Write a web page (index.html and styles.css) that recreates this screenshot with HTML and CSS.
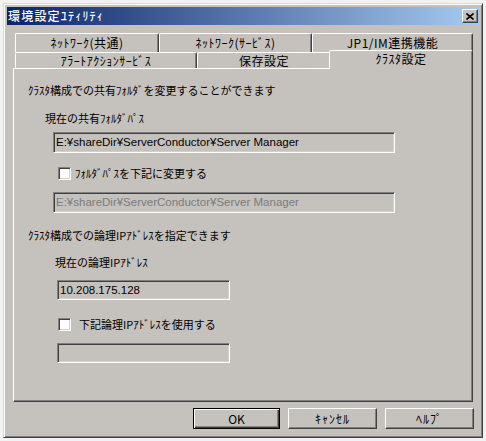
FILE: index.html
```html
<!DOCTYPE html>
<html lang="ja">
<head>
    <meta charset="UTF-8">
    <title>環境設定ﾕﾃｨﾘﾃｨ</title>
    <link rel="stylesheet" href="styles.css">
</head>
<body>
  <div class="window">
      <div class="titlebar">
          <span class="title">環境設定ﾕﾃｨﾘﾃｨ</span>
          <span class="close-btn">
              <svg width="8" height="7" viewBox="0 0 8 7"><path d="M0.5 0.5 L7.5 6.5 M7.5 0.5 L0.5 6.5" stroke="#000" stroke-width="1.6" fill="none"/></svg>
          </span>
      </div>

      <div class="tabs">
          <div class="tab-row back">
              <div class="tab t1">ﾈｯﾄﾜｰｸ(共通)</div>
              <div class="tab t2">ﾈｯﾄﾜｰｸ(ｻｰﾋﾞｽ)</div>
              <div class="tab t3">JP1/IM連携機能</div>
          </div>
          <div class="tab-row front">
              <div class="tab t4">ｱﾗｰﾄｱｸｼｮﾝｻｰﾋﾞｽ</div>
              <div class="tab t5">保存設定</div>
              <div class="tab active">ｸﾗｽﾀ設定</div>
          </div>
      </div>

      <div class="panel">
          <p class="heading">ｸﾗｽﾀ構成での共有ﾌｫﾙﾀﾞを変更することができます</p>
          <p class="label share-label">現在の共有ﾌｫﾙﾀﾞﾊﾟｽ</p>
          <div class="field share-field">E:¥shareDir¥ServerConductor¥Server Manager</div>
          <div class="check-row share-check">
              <span class="checkbox"></span>
              <span class="check-text">ﾌｫﾙﾀﾞﾊﾟｽを下記に変更する</span>
          </div>
          <div class="field share-field disabled">E:¥shareDir¥ServerConductor¥Server Manager</div>

          <p class="heading ip-heading">ｸﾗｽﾀ構成での論理IPｱﾄﾞﾚｽを指定できます</p>
          <p class="label ip-label">現在の論理IPｱﾄﾞﾚｽ</p>
          <div class="field ip-field">10.208.175.128</div>
          <div class="check-row ip-check">
              <span class="checkbox"></span>
              <span class="check-text wide">下記論理IPｱﾄﾞﾚｽを使用する</span>
          </div>
          <div class="field ip-field last"></div>
      </div>

      <div class="buttons">
          <div class="btn default">OK</div>
          <div class="btn">ｷｬﾝｾﾙ</div>
          <div class="btn">ﾍﾙﾌﾟ</div>
      </div>
  </div>
</body>
</html>
```

FILE: styles.css
```css
body { margin: 0; background-color: #f2f2f2; font-family: "Noto Sans CJK JP", sans-serif; font-size: 12px; color: #000; }
p { margin: 0; }

.window { box-sizing: border-box; width: 480px; height: 435px; margin: 3px; padding: 3px; background-color: #c5c1bc; border: 1px solid; border-color: #dcd8d2 #404040 #404040 #dcd8d2; box-shadow: inset 1px 1px #fff, inset -1px -1px #808080; display: flex; flex-direction: column; }

.titlebar { height: 18px; display: flex; align-items: center; justify-content: space-between; padding-left: 1px; background: linear-gradient(to right, #0a246a, #a6caf0); }
.title { color: #fff; font-size: 12px; font-weight: 500; letter-spacing: 1.2px; line-height: 18px; }
.close-btn { box-sizing: border-box; width: 16px; height: 14px; margin-right: 1px; background-color: #c5c1bc; border: 1px solid; border-color: #fff #404040 #404040 #fff; box-shadow: inset -1px -1px #808080; display: flex; align-items: center; justify-content: center; }

.tabs { margin-top: 8px; padding: 0 6px 0 8px; }
.tab-row { display: flex; }
.back { height: 19px; }
.front { height: 16px; }
.tab { box-sizing: border-box; display: flex; align-items: center; justify-content: center; border-top: 1px solid #fff; border-left: 1px solid #fff; border-right: 1px solid #404040; box-shadow: inset -1px 0 #808080; border-radius: 2px 2px 0 0; line-height: 14px; letter-spacing: 0.5px; white-space: nowrap; }
.t1 { width: 144px; }
.t2 { width: 153px; }
.t3 { width: 161px; }
.t4 { width: 182px; }
.t5 { width: 134px; }
.active { width: 144px; height: 19px; margin: -2px 0 -1px -2px; padding-bottom: 2px; background-color: #c5c1bc; position: relative; z-index: 1; }

.panel { box-sizing: border-box; height: 334px; margin: 0 6px; padding: 13px 0 0 14px; border: 1px solid; border-color: #fff #404040 #404040 #fff; box-shadow: inset -1px -1px #808080; font-size: 11px; }
.heading, .label { line-height: 16px; white-space: nowrap; }
.share-label { margin: 12px 0 0 17px; }
.ip-heading { margin-top: 14px; }
.ip-label { margin: 11px 0 0 27px; }

.field { box-sizing: border-box; height: 21px; padding-left: 2px; border: 1px solid; border-color: #808080 #fff #fff #808080; box-shadow: inset 1px 1px #404040, inset -1px -1px #d4d0c8; font-family: "Liberation Sans", Arial, sans-serif; font-size: 11.5px; line-height: 19px; color: #000; white-space: nowrap; overflow: hidden; }
.share-field { width: 342px; margin: 6px 0 0 25px; }
.disabled { margin-top: 11px; color: #7c7c7c; }
.ip-field { width: 173px; height: 20px; margin: 10px 0 0 29px; line-height: 18px; }
.ip-field.last { margin-top: 11px; }

.check-row { display: flex; align-items: center; height: 16px; margin-left: 30px; }
.share-check { margin-top: 12px; }
.ip-check { margin-top: 16px; }
.checkbox { box-sizing: border-box; width: 13px; height: 13px; background-color: #fff; border: 1px solid; border-color: #808080 #fff #fff #808080; box-shadow: inset 1px 1px #404040, inset -1px -1px #d4d0c8; }
.check-text { margin-left: 4px; line-height: 16px; white-space: nowrap; }
.check-text.wide { margin-left: 8px; }

.buttons { display: flex; justify-content: flex-end; gap: 8px; margin-top: 6px; padding-right: 5px; }
.btn { box-sizing: border-box; width: 89px; height: 21px; display: flex; align-items: center; justify-content: center; border: 1px solid; border-color: #fff #404040 #404040 #fff; box-shadow: inset -1px -1px #808080; letter-spacing: 1px; }
.btn.default { width: 87px; border-color: #000; box-shadow: inset 1px 1px #fff, inset -1px -1px #404040, inset -2px -2px #808080; letter-spacing: 0; }
```
